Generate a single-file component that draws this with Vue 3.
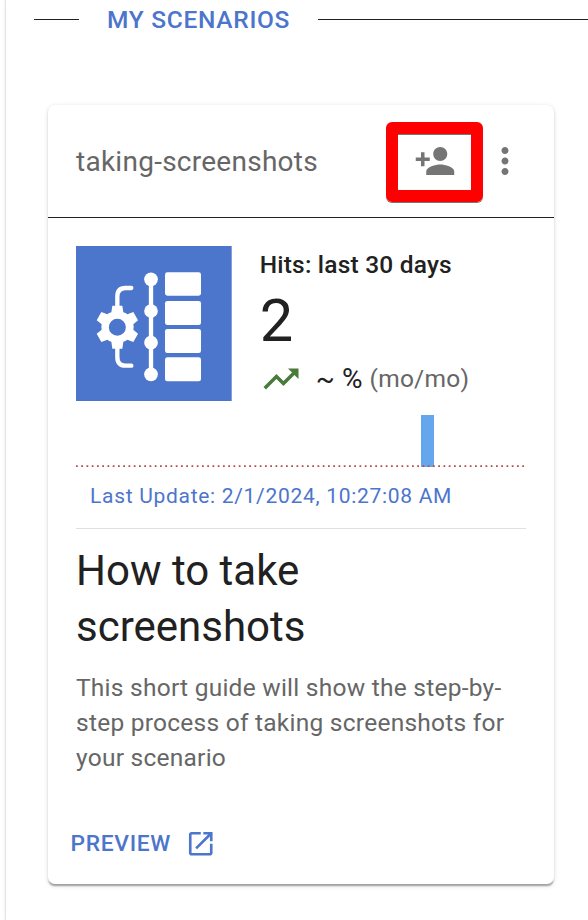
<script setup>
const title = 'taking-screenshots'
const days = Array.from({ length: 30 }, (_, i) => (i === 23 ? 2 : 0))
const peak = Math.max(...days)
const rows = [97, 183, 267, 352]
const nodes = [118, 213, 308, 403]
</script>

<template>
  <main class="page">
    <div class="section-title">
      <span class="rule short"></span>
      <h2>MY SCENARIOS</h2>
      <span class="rule long"></span>
    </div>
    <article class="card">
      <header class="card-header">
        <span class="name">{{ title }}</span>
        <button class="share" aria-label="Share">
          <svg class="icon" viewBox="0 0 24 24"><path d="M15 12c2.21 0 4-1.79 4-4s-1.79-4-4-4-4 1.79-4 4 1.79 4 4 4zm-9-2V7H4v3H1v2h3v3h2v-3h3v-2H6zm9 4c-2.67 0-8 1.34-8 4v2h16v-2c0-2.66-5.33-4-8-4z" /></svg>
        </button>
        <button class="more" aria-label="More">
          <svg class="icon" viewBox="0 0 24 24"><path d="M12 8c1.1 0 2-.9 2-2s-.9-2-2-2-2 .9-2 2 .9 2 2 2zm0 2c-1.1 0-2 .9-2 2s.9 2 2 2 2-.9 2-2-.9-2-2-2zm0 6c-1.1 0-2 .9-2 2s.9 2 2 2 2-.9 2-2-.9-2-2-2z" /></svg>
        </button>
      </header>
      <div class="body">
        <section class="stats">
          <svg class="logo" viewBox="18 18 467 465" preserveAspectRatio="none">
            <rect x="18" y="18" width="467" height="465" fill="#4c75cc" />
            <g fill="none" stroke="#fff" stroke-width="13" stroke-linecap="round">
              <path d="M142 205V170Q142 144 166 144H184M142 315V351Q142 377 166 377H184" />
              <path d="M243 118V403" />
            </g>
            <g fill="#fff">
              <circle v-for="y in nodes" :key="y" cx="243" :cy="y" r="20.5" />
              <rect v-for="y in rows" :key="y" x="285" :y="y" width="108" :height="y === 97 ? 70 : 72" rx="7" />
              <path fill-rule="evenodd" d="M127 197H157L160 217Q167 219 172 223L190 216L204 241L190 253Q192 261 190 269L204 281L190 306L172 299Q167 303 160 305L157 326H127L124 305Q117 303 112 299L94 306L80 281L95 269Q93 261 95 253L80 241L94 216L112 223Q117 219 124 217ZM142 236A25.500 25.500 0 1 0 142 287A25.500 25.500 0 1 0 142 236Z" />
            </g>
          </svg>
          <div class="figures">
            <div class="hits">Hits: last 30 days</div>
            <div class="count">2</div>
            <div class="trend">
              <svg class="icon up" viewBox="0 0 24 24"><path d="m16 6 2.290 2.290-4.880 4.880-4-4L2 16.590 3.410 18l6-6 4 4 6.300-6.290L22 12V6z" /></svg>
              <span class="pct">~ %</span>
              <span class="muted">(mo/mo)</span>
            </div>
          </div>
        </section>
        <div class="chart">
          <span v-for="(d, i) in days" :key="i" class="slot"><i :style="{ height: (d / peak) * 100 + '%' }"></i></span>
          <svg class="baseline" viewBox="0 0 450 2"><path d="M0 1H449" stroke="#b94a48" stroke-width="1.750" stroke-dasharray="1.750 3.500" /></svg>
        </div>
        <div class="updated">Last Update: 2/1/2024, 10:27:08 AM</div>
        <h3>How to take screenshots</h3>
        <p>This short guide will show the step-by-step process of taking screenshots for your scenario</p>
      </div>
      <a class="preview">
        <span>PREVIEW</span>
        <svg class="open" viewBox="0 0 24 24"><path d="M19 19H5V5h7V3H5c-1.110 0-2 .9-2 2v14c0 1.100.89 2 2 2h14c1.100 0 2-.9 2-2v-7h-2v7zM14 3v2h3.590l-9.830 9.830 1.410 1.410L19 6.410V10h2V3h-7z" /></svg>
      </a>
    </article>
  </main>
</template>

<style>
body { background: #fff; overflow: hidden; }
</style>

<style scoped>
* { box-sizing: border-box; }
.page {
  width: 583px;
  height: 920px;
  margin-left: 5px;
  border-left: 1px solid #e4e4e4;
  box-shadow: -1px 0 2px rgba(0, 0, 0, 0.05);
  font-family: Roboto, sans-serif;
  color: #212121;
  overflow: hidden;
}
.section-title {
  display: flex;
  align-items: center;
  height: 39px;
  padding-left: 28px;
}
.rule { height: 1px; background: #212121; }
.short { width: 45px; }
.long { flex: 1; }
h2 {
  width: 239px;
  margin: 0;
  padding-left: 28px;
  font-size: 24.5px;
  font-weight: 500;
  line-height: 39px;
  letter-spacing: 0.7px;
  color: #4c75cc;
  white-space: nowrap;
}
.card {
  width: 506px;
  height: 779px;
  margin: 66px 0 0 42px;
  border-radius: 7px;
  box-shadow: 0 3.5px 1.75px -1.75px rgba(0, 0, 0, 0.2), 0 1.75px 1.75px rgba(0, 0, 0, 0.14), 0 1.75px 5.25px rgba(0, 0, 0, 0.12);
}
.card-header {
  display: flex;
  align-items: center;
  height: 113px;
  padding: 0 28px;
  border-bottom: 1px solid #212121;
}
.name {
  padding-top: 2px;
  font-size: 28px;
  line-height: 42px;
  letter-spacing: 0.26px;
  color: #666;
}
button {
  display: flex;
  align-items: center;
  justify-content: center;
  padding: 0;
  background: none;
}
.share {
  width: 97px;
  height: 80px;
  margin: 2px 0 0 auto;
  border: 12px solid #f00;
  border-radius: 6px;
  box-shadow: 0 1px 0 #777, inset 0 1px 0 #777;
}
.share .icon { flex: none; margin-top: -2px; }
.more { border: 0; margin: 0 0 0 1px; }
.icon { width: 42px; height: 42px; fill: #757575; }
.body { padding: 28px 28px 0; }
.stats { display: flex; gap: 28px; height: 155px; }
.logo { width: 155.7px; height: 155px; flex: none; }
.figures { display: flex; flex-direction: column; padding-top: 1px; white-space: nowrap; }
.hits {
  height: 35px;
  font-size: 24.5px;
  font-weight: 500;
  line-height: 36px;
  letter-spacing: 0.2px;
}
.count {
  height: 76px;
  font-size: 59.5px;
  line-height: 79px;
}
.trend {
  display: flex;
  align-items: center;
  height: 42px;
  font-size: 24.5px;
  line-height: 42px;
}
.up { fill: #4a7b3b; }
.pct { margin-left: 14px; font-size: 28px; letter-spacing: 0.1px; }
.muted { margin-left: 7px; color: #666; letter-spacing: 0.26px; }
.chart {
  position: relative;
  display: flex;
  height: 52px;
  margin-top: 14px;
}
.slot { flex: 1; display: flex; align-items: flex-end; padding-right: 2px; }
.slot i { width: 100%; background: #65a6ec; }
.baseline { position: absolute; left: 0; bottom: 0.5px; width: 450px; height: 2px; }
.updated {
  height: 62px;
  padding-left: 14px;
  border-bottom: 1px solid #e0e0e0;
  font-size: 21px;
  line-height: 58px;
  letter-spacing: 0.7px;
  color: #4c75cc;
  white-space: nowrap;
}
h3 {
  width: 300px;
  margin: 14px 0 0;
  font-size: 42px;
  font-weight: 400;
  line-height: 56px;
}
p {
  margin: 15px 0 0;
  font-size: 24.5px;
  line-height: 35px;
  letter-spacing: 0.25px;
  color: #666;
}
.preview {
  display: flex;
  align-items: center;
  gap: 14px;
  height: 42px;
  margin: 47px 0 0 22.5px;
  font-size: 22.75px;
  font-weight: 500;
  letter-spacing: 0.7px;
  color: #4c75cc;
}
.open { width: 31.5px; height: 31.5px; margin-top: 2px; fill: #4c75cc; }
</style>
